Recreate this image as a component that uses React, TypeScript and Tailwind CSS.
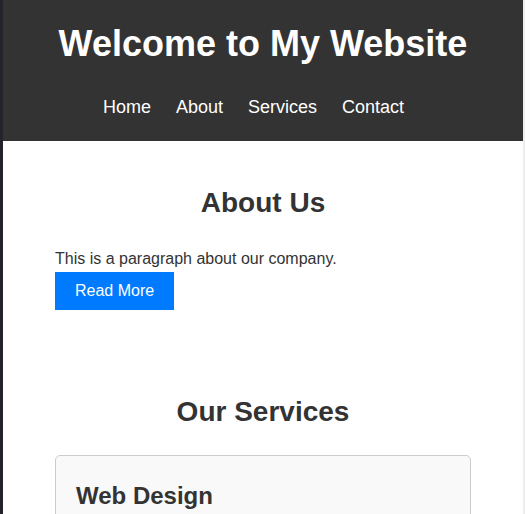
export default function App() {
  const links = ["Home", "About", "Services", "Contact"];

  return (
    <div className="flex min-h-screen font-['Liberation_Sans',Arial,sans-serif] text-[#333]">
      <div className="w-[3px] shrink-0 bg-[#24232b]" />

      <div className="flex-1 bg-white">
        {/* header */}
        <header className="bg-[#333] pt-[23px] pb-[23px] text-white">
          <h1 className="text-center text-[36px] font-bold leading-[normal]">
            Welcome to My Website
          </h1>
          <nav className="mt-[32px]">
            <ul className="flex justify-center gap-[25px] pr-[19px] text-[18px] leading-[normal]">
              {links.map((l) => (
                <li key={l}>
                  <a href="#">{l}</a>
                </li>
              ))}
            </ul>
          </nav>
        </header>

        <main className="px-[52px]">
          {/* about */}
          <section className="pt-[46px]">
            <h2 className="text-center text-[28px] font-bold leading-[normal]">
              About Us
            </h2>
            <p className="mt-[31px] text-[16px] leading-[normal]">
              This is a paragraph about our company.
            </p>
            <a
              href="#"
              className="mt-[4px] inline-block bg-[#007bff] px-[20px] py-[10px] text-[16px] leading-[normal] text-white"
            >
              Read More
            </a>
          </section>

          {/* services */}
          <section className="mt-[86px]">
            <h2 className="text-center text-[28px] font-bold leading-[normal]">
              Our Services
            </h2>
            <div className="mt-[27px] h-[80px] rounded-[5px] border border-[#ccc] bg-[#f9f9f9] px-[20px] pt-[26px]">
              <h3 className="text-[24px] font-bold leading-[normal]">Web Design</h3>
            </div>
          </section>
        </main>
      </div>

      <div className="w-[2px] shrink-0 bg-[#eeeeee]" />
    </div>
  );
}
